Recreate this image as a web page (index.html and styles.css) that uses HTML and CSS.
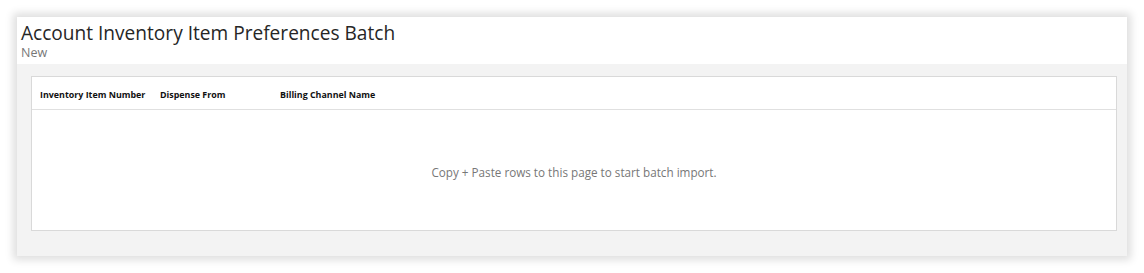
FILE: index.html
```html
<!DOCTYPE html>
<html>
<head>
<meta charset="utf-8">
<link rel="stylesheet" href="styles.css">
</head>
<body>
<div class="card">
  <div class="header">
    <div class="title">Account Inventory Item Preferences Batch</div>
    <div class="subtitle">New</div>
  </div>
  <div class="body">
    <div class="grid">
      <div class="grid-head">
        <div class="col">Inventory Item Number</div>
        <div class="col">Dispense From</div>
        <div class="col">Billing Channel Name</div>
      </div>
      <div class="grid-empty">Copy + Paste rows to this page to start batch import.</div>
    </div>
  </div>
</div>
</body>
</html>
```
FILE: styles.css
```css
html, body { margin: 0; padding: 0; background: #fff; }
body {
  padding: 17px;
  font-family: "Open Sans", "Noto Sans", sans-serif;
  color: #222;
}
.card {
  height: 239px;
  display: flex;
  flex-direction: column;
  background: #f3f3f3;
  box-shadow: 0 0 8px 4px rgba(0,0,0,0.13);
}
.header {
  background: #fff;
  height: 47px;
  padding: 3px 0 0 4px;
  box-sizing: border-box;
}
.title {
  font-size: 19.1px;
  line-height: 26px;
  color: #262626;
}
.subtitle {
  font-size: 12.5px;
  line-height: 13px;
  color: #777;
}
.body {
  flex: 1;
  padding: 12px 10px 25px 14px;
  display: flex;
}
.grid {
  flex: 1;
  background: #fff;
  border: 1px solid #d9d9d9;
  display: flex;
  flex-direction: column;
}
.grid-head {
  height: 33px;
  border-bottom: 1px solid #e0e0e0;
  display: flex;
  align-items: center;
  padding: 2px 0 0 8px;
  box-sizing: border-box;
}
.col {
  width: 120px;
  font-size: 8.9px;
  font-weight: 700;
  color: #111;
}
.grid-empty {
  flex: 1;
  display: flex;
  align-items: center;
  justify-content: center;
  font-size: 11.7px;
  color: #777;
  padding-top: 4px;
}
```
